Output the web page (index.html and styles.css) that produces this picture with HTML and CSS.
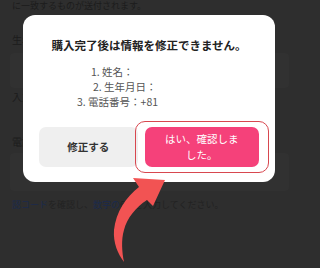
FILE: index.html
```html
<!DOCTYPE html>
<html lang="ja">
<head>
<meta charset="utf-8">
<link rel="stylesheet" href="styles.css">
</head>
<body>
<div class="page">
  <div class="under">
    <div class="under-top">に一致するものが送付されます。</div>
    <div class="under-label l-birth">生年月日</div>
    <div class="under-box box1"></div>
    <div class="under-label l-input">入力</div>
    <div class="under-label l-tel">電話番号</div>
    <div class="under-box box2"></div>
    <div class="under-note"><span class="blue">認コード</span>を確認し、<span class="blue">数字の</span>6桁を入力してください。</div>
  </div>

  <div class="modal">
    <div class="modal-title">購入完了後は情報を修正できません。</div>
    <div class="modal-list">
      <div class="li li1">1. 姓名：</div>
      <div class="li li2">2. 生年月日：</div>
      <div class="li li3">3. 電話番号：+81</div>
    </div>
    <div class="modal-actions">
      <div class="btn btn-gray">修正する</div>
      <div class="btn btn-pink">はい、確認しま<br>した。</div>
    </div>
    <div class="highlight"></div>
  </div>

  <svg class="arrow" width="299" height="268" viewBox="0 0 299 268">
    <path d="M165,180 L133,178 L139,187 C126,197 116,212 114,230 C113,243 118,254 124,262 C122,252 121,240 124,230 C127,218 136,207 147,200 L153,206 Z" fill="#f25353"/>
  </svg>
</div>
</body>
</html>
```
FILE: styles.css
```css
* { box-sizing: border-box; }
html, body { margin: 0; padding: 0; }
body {
  font-family: "Noto Sans CJK JP", "Noto Sans", sans-serif;
  background: #2e2e2e;
}
.page {
  position: relative;
  width: 299px;
  height: 268px;
  overflow: hidden;
  background: #2e2e2e;
}
.under {
  padding: 0 10px 0 12px;
  display: flex;
  flex-direction: column;
  color: #1c1c1c;
  font-size: 10px;
  line-height: 12px;
}
.under-top {
  margin-top: 0;
  font-size: 9px;
  line-height: 11px;
}
.l-birth { margin-top: 23px; }
.under-box {
  margin-left: -2px;
  background: #313131;
  border-radius: 4px;
}
.box1 { margin-top: 7px; height: 35px; }
.l-input { margin-top: 3px; }
.l-tel { margin-top: 33px; }
.box2 { margin-top: 5px; height: 38px; }
.under-note {
  margin-top: 8px;
  font-size: 9px;
  color: #222;
}
.blue { color: #1b2a4c; }

.modal {
  position: absolute;
  left: 23px;
  top: 15px;
  width: 252px;
  height: 167px;
  background: #ffffff;
  border-radius: 12px;
  padding: 22px 16px 15px;
  display: flex;
  flex-direction: column;
}
.modal-title {
  font-size: 11.5px;
  line-height: 16px;
  font-weight: 700;
  color: #222;
  text-align: center;
  white-space: nowrap;
}
.modal-list {
  margin-top: 11px;
  padding-left: 38px;
  font-size: 10.5px;
  line-height: 15px;
  color: #555;
}
.li1 { padding-left: 14px; }
.li2 { padding-left: 16px; }
.modal-actions {
  margin-top: auto;
  display: flex;
  gap: 7px;
  height: 40px;
}
.btn {
  flex: 1;
  border-radius: 7px;
  display: flex;
  align-items: center;
  justify-content: center;
  text-align: center;
  font-size: 10.5px;
  line-height: 16px;
}
.btn-gray {
  background: #efefef;
  color: #333;
  font-weight: 700;
}
.btn-pink {
  background: #f5417a;
  color: #fff;
  padding: 0 8px;
}
.highlight {
  position: absolute;
  left: 112px;
  top: 106px;
  width: 134px;
  height: 52px;
  border: 1.5px solid #d8474f;
  border-radius: 10px;
}
.arrow {
  position: absolute;
  left: 0;
  top: 0;
}
```
